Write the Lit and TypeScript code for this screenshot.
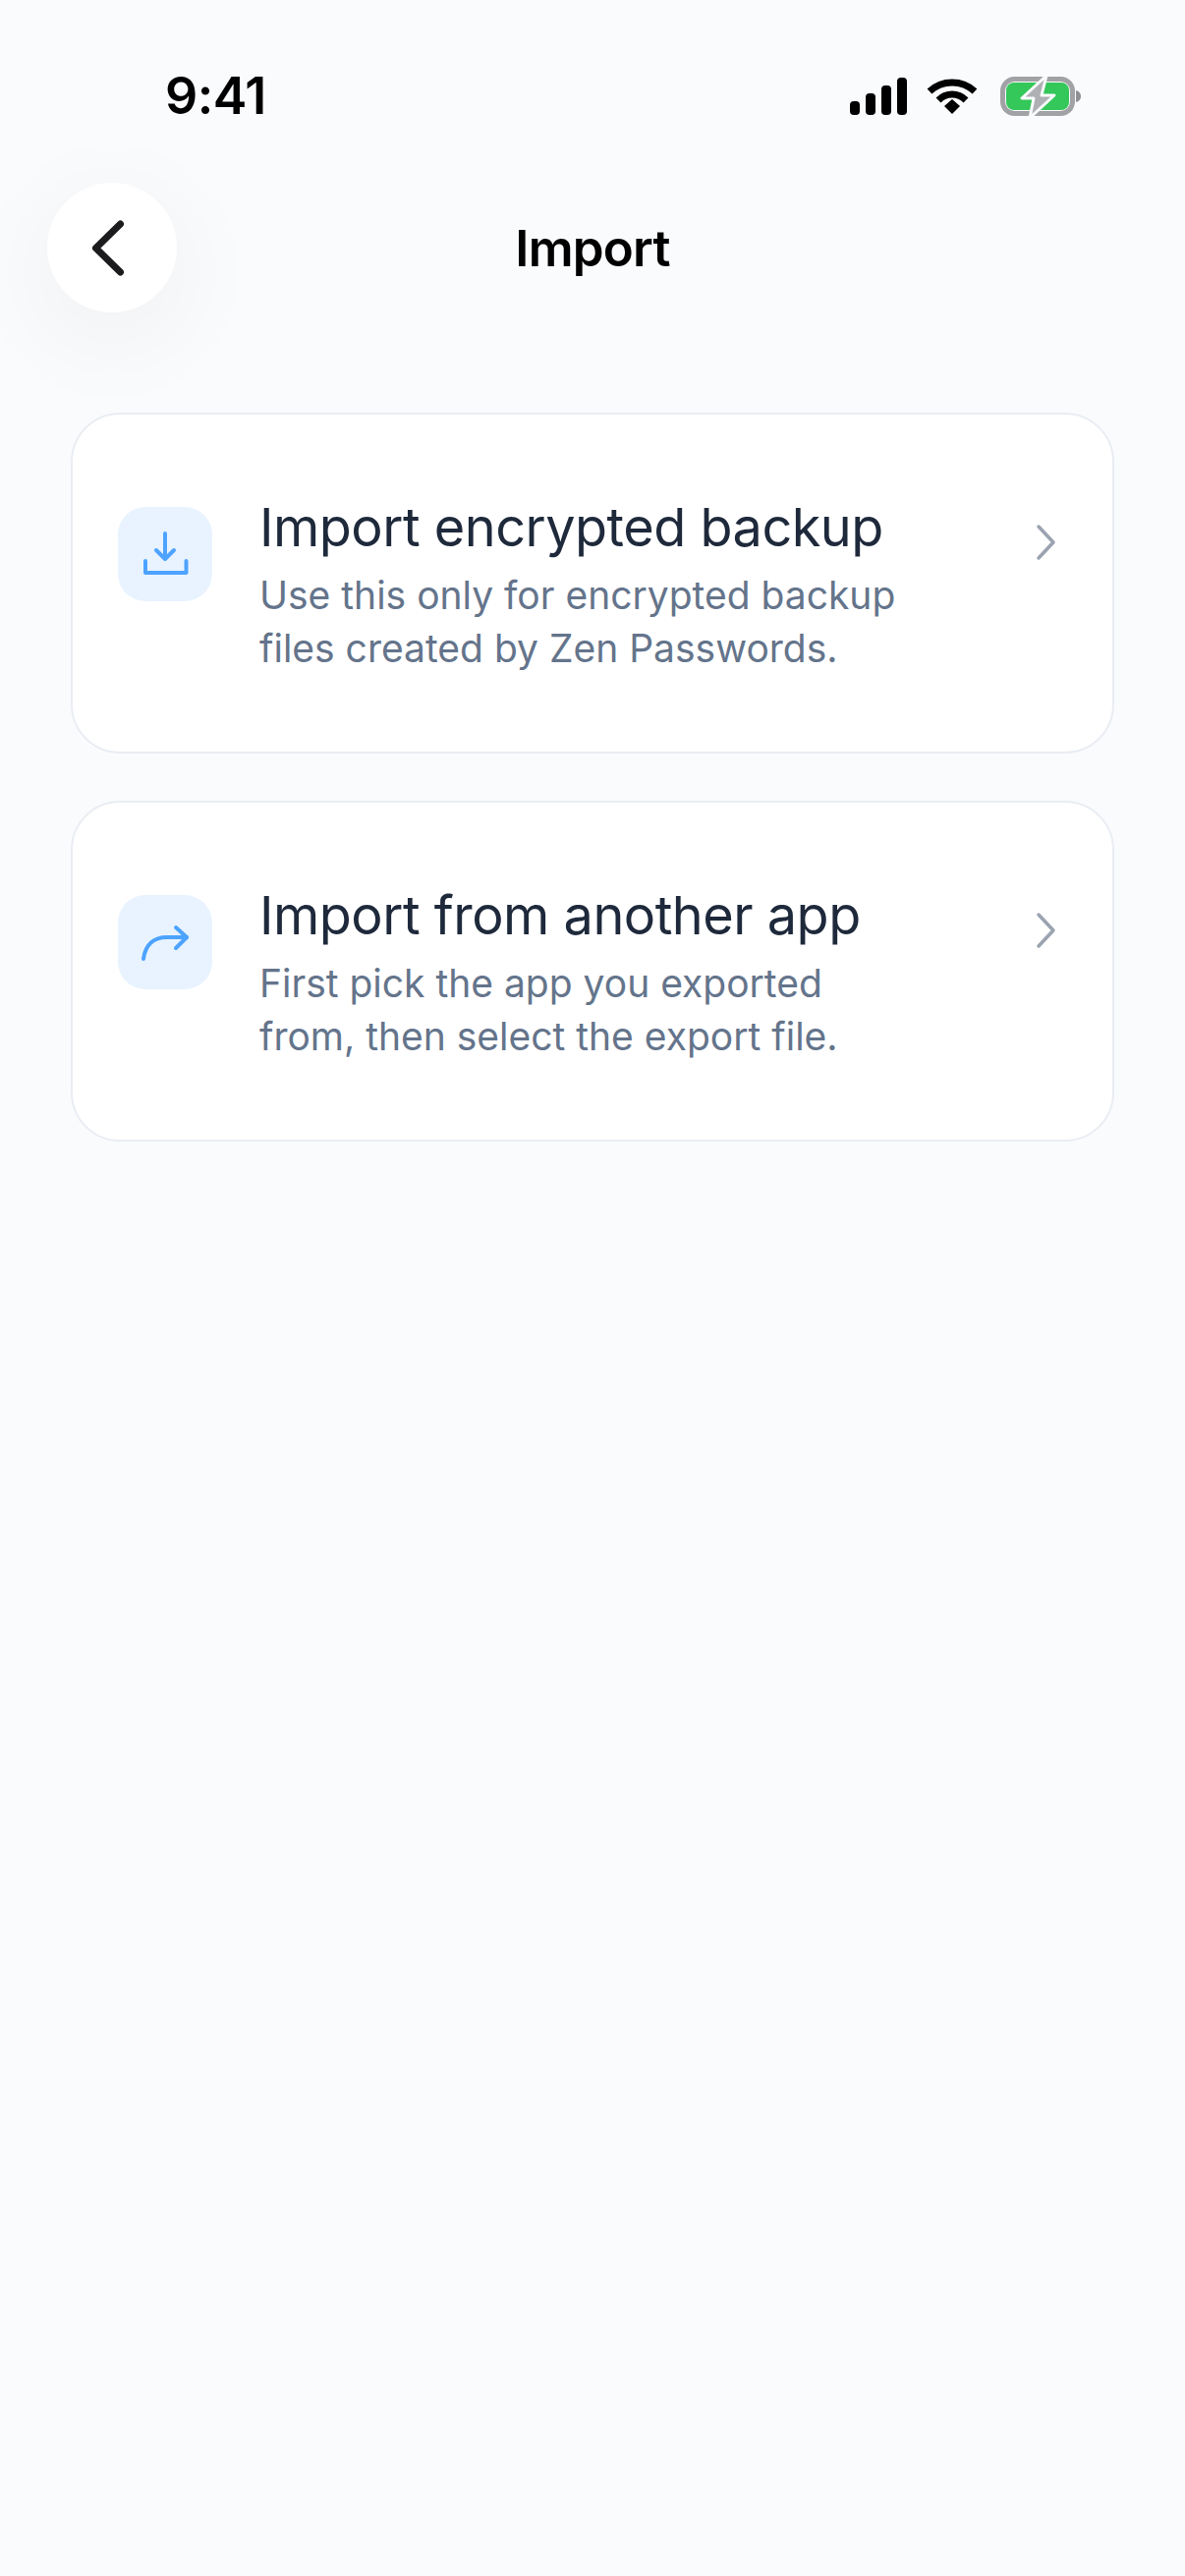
import { LitElement, html, css } from "lit";
import { customElement } from "lit/decorators.js";

@customElement("app-root")
export class AppRoot extends LitElement {
  static styles = css`
    :host { display: block; }
    * { box-sizing: border-box; }
    .screen {
      width: 1206px; height: 2622px; background: #fafbfd; overflow: hidden;
      font-family: Inter, "Liberation Sans", sans-serif; display: flex; flex-direction: column;
    }
    .status { height: 186px; padding: 70px 72px 0 168px; display: flex; justify-content: space-between; align-items: flex-start; }
    .time { font-size: 52px; line-height: 56px; font-weight: 600; color: #000; letter-spacing: -0.5px; }
    .status-icons { display: flex; align-items: center; gap: 20px; height: 56px; padding-right: 34px; }
    .status-icons svg { display: block; }
    .status-icons .battery { margin-left: 3px; }
    .nav { display: grid; grid-template-columns: 1fr auto 1fr; align-items: center; padding: 0 48px; height: 132px; }
    .back {
      width: 132px; height: 132px; border-radius: 50%; background: #fff; display: flex; align-items: center; justify-content: center;
      box-shadow: 0 24px 110px rgba(15, 23, 42, 0.055);
    }
    .title { font-size: 51px; line-height: 56px; font-weight: 600; color: #000; letter-spacing: -0.8px; padding-top: 2px; }
    .list { display: flex; flex-direction: column; gap: 48px; padding: 102px 72px 0; }
    .card {
      height: 347px; background: #fff; border: 2px solid #e9edf3; border-radius: 50px;
      display: flex; align-items: flex-start; padding: 83px 56px 0 46px;
    }
    .tile { width: 96px; height: 96px; margin-top: 11px; border-radius: 28px; background: #e8f3ff; display: flex; align-items: center; justify-content: center; flex: none; }
    .text { margin-left: 48px; flex: 1; }
    .h { font-size: 54px; line-height: 64px; font-weight: 400; color: #1e293b; letter-spacing: -0.5px; }
    .p { font-size: 39px; line-height: 54px; color: #64748b; margin-top: 10px; }
    .chev { flex: none; display: block; margin-top: 27px; }
  `;

  private card(icon: unknown, title: string, l1: string, l2: string) {
    return html`<div class="card">
      <div class="tile">${icon}</div>
      <div class="text">
        <div class="h">${title}</div>
        <div class="p">${l1}<br />${l2}</div>
      </div>
      <svg class="chev" width="24" height="40" viewBox="0 0 24 40" fill="none"><path d="M5 4 L20 20 L5 36" stroke="#9aa3b0" stroke-width="3.500" stroke-linecap="round" stroke-linejoin="round"/></svg>
    </div>`;
  }

  render() {
    const dl = html`<svg width="48" height="48" viewBox="0 0 48 48" fill="none" stroke="#4da3ff" stroke-width="4" stroke-linecap="round" stroke-linejoin="round"><path d="M24 3 V28"/><path d="M15 20 L24 29 L33 20"/><path d="M4 31 V43 H45.500 V31"/></svg>`;
    const share = html`<svg width="50" height="40" viewBox="0 0 50 40" fill="none" stroke="#4da3ff" stroke-width="4" stroke-linecap="round" stroke-linejoin="round"><path d="M3 37 C5 22 14 15 27 15 H47"/><path d="M36 5 L47 15 L36 26"/></svg>`;
    return html`<div class="screen">
      <div class="status">
        <div class="time">9:41</div>
        <div class="status-icons">
          <svg width="58" height="38" viewBox="0 0 58 38" fill="#000"><rect x="0" y="24" width="10" height="14" rx="4"/><rect x="16" y="16" width="10" height="22" rx="4"/><rect x="32" y="8" width="10" height="30" rx="4"/><rect x="48" y="0" width="10" height="38" rx="4"/></svg>
          <svg width="52" height="38" viewBox="0 0 52 38" fill="none" stroke="#000"><path d="M3 14 C16 2 36 2 49 14" stroke-width="7"/><path d="M12 23 C20 15 32 15 40 23" stroke-width="7"/><path d="M18 29 L26 22 L34 29 L26 37 Z" fill="#000" stroke="none"/></svg>
          <svg class="battery" width="82" height="44" viewBox="0 0 82 44"><rect x="2.500" y="4.500" width="71" height="35" rx="12" fill="none" stroke="#a0a2a5" stroke-width="5"/><rect x="6" y="8" width="64" height="28" rx="8" fill="#34c759"/><path d="M77 16 C81 17 82 20 82 22 C82 24 81 27 77 28 Z" fill="#8e8e93"/><path d="M47 1 L22 24 H34 L30 44 L55 21 H42 Z" fill="#aeb0b3" stroke="#fafbfd" stroke-width="3" stroke-linejoin="round"/></svg>
        </div>
      </div>
      <div class="nav">
        <div>
          <div class="back">
            <svg width="48" height="60" viewBox="0 0 48 60" fill="none"><path d="M32.500 6 L7.500 30.500 L32.500 55" stroke="#1c1c1e" stroke-width="7" stroke-linecap="round" stroke-linejoin="round"/></svg>
          </div>
        </div>
        <div class="title">Import</div>
        <div></div>
      </div>
      <div class="list">
        ${this.card(dl, "Import encrypted backup", "Use this only for encrypted backup", "files created by Zen Passwords.")}
        ${this.card(share, "Import from another app", "First pick the app you exported", "from, then select the export file.")}
      </div>
    </div>`;
  }
}
